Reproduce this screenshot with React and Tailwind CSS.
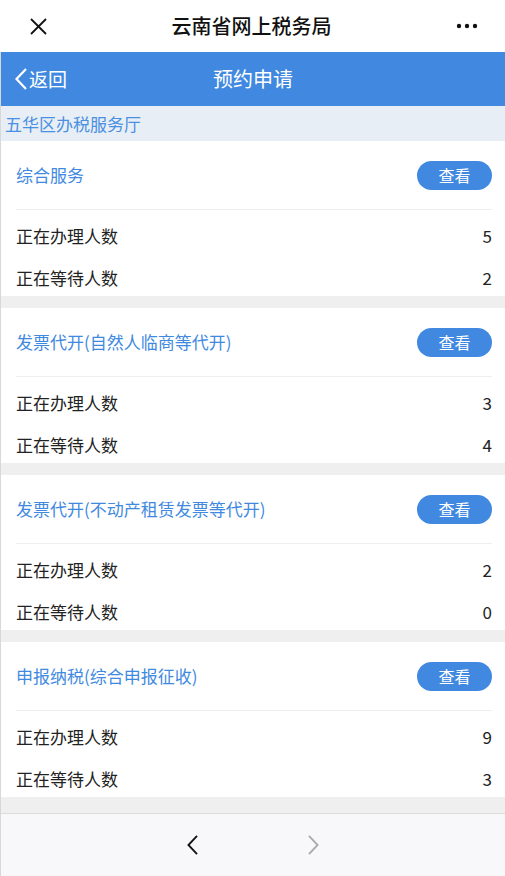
const halls = [
  { name: "综合服务", handling: 5, waiting: 2 },
  { name: "发票代开(自然人临商等代开)", handling: 3, waiting: 4 },
  { name: "发票代开(不动产租赁发票等代开)", handling: 2, waiting: 0 },
  { name: "申报纳税(综合申报征收)", handling: 9, waiting: 3 },
];

const font = { fontFamily: '"Noto Sans CJK SC", "Noto Sans", sans-serif' };

const Chevron = ({ dir = "left", className, stroke = 2 }) => (
  <svg viewBox="0 0 12 22" className={className} fill="none" stroke="currentColor" strokeWidth={stroke}>
    {dir === "left" ? <polyline points="11,1 1.5,11 11,21" /> : <polyline points="1,1 10.5,11 1,21" />}
  </svg>
);

const ServiceCard = ({ item }) => (
  <div className="bg-white pl-[15px] pr-[13px]">
    <div className="flex h-[68px] items-center justify-between">
      <span className="text-[17px] text-[#3f8ae0]">{item.name}</span>
      <button className="h-[29px] w-[75px] rounded-full bg-[#4189e0] text-[16px] text-white">
        查看
      </button>
    </div>
    <div className="border-t border-[#eeeeee]" />
    <div className="flex flex-col gap-[22px] pt-[16px] pb-[8px] text-[17px] leading-[20px] text-[#222]">
      <div className="flex justify-between">
        <span>正在办理人数</span>
        <span>{item.handling}</span>
      </div>
      <div className="flex justify-between">
        <span>正在等待人数</span>
        <span>{item.waiting}</span>
      </div>
    </div>
  </div>
);

export default function App() {
  return (
    <div className="flex h-[876px] w-full flex-col bg-white" style={font}>
      {/* Top window bar */}
      <div className="flex h-[52px] shrink-0 items-center justify-between pl-[30px] pr-[27px]">
        <svg viewBox="0 0 17 17" className="h-[17px] w-[17px] text-[#111]" stroke="currentColor" strokeWidth="1.8">
          <line x1="1" y1="1" x2="16" y2="16" />
          <line x1="16" y1="1" x2="1" y2="16" />
        </svg>
        <span className="text-[20px] font-medium text-[#111]">云南省网上税务局</span>
        <svg viewBox="0 0 22 6" className="h-[6px] w-[22px] text-[#111]" fill="currentColor">
          <circle cx="3" cy="3" r="2.2" />
          <circle cx="11" cy="3" r="2.2" />
          <circle cx="19" cy="3" r="2.2" />
        </svg>
      </div>

      <div className="flex flex-1 flex-col border-l border-[#d8d8d8]">
        {/* Blue header */}
        <div className="relative flex h-[54px] shrink-0 items-center justify-center bg-[#4189e0] text-white">
          <div className="absolute left-[14px] top-0 flex h-full items-center gap-[2px]">
            <Chevron className="h-[22px] w-[12px]" stroke={2.2} />
            <span className="text-[19px]">返回</span>
          </div>
          <span className="text-[20px]">预约申请</span>
        </div>

        {/* Hall label */}
        <div className="flex h-[35px] shrink-0 items-center bg-[#e8eef5] px-[4px] text-[17px] text-[#4a90e2]">
          五华区办税服务厅
        </div>

        {/* Cards */}
        <div className="flex flex-1 flex-col gap-[12px] overflow-hidden bg-[#efefef]">
          {halls.map((h) => (
            <ServiceCard key={h.name} item={h} />
          ))}
        </div>

        {/* Bottom nav */}
        <div className="flex h-[63px] shrink-0 items-center justify-center gap-[110px] border-t border-[#dddddd] bg-[#f8f8fa]">
          <Chevron className="h-[20px] w-[11px] text-[#111]" stroke={2} />
          <Chevron dir="right" className="h-[20px] w-[11px] text-[#aaaaaa]" stroke={2} />
        </div>
      </div>
    </div>
  );
}
